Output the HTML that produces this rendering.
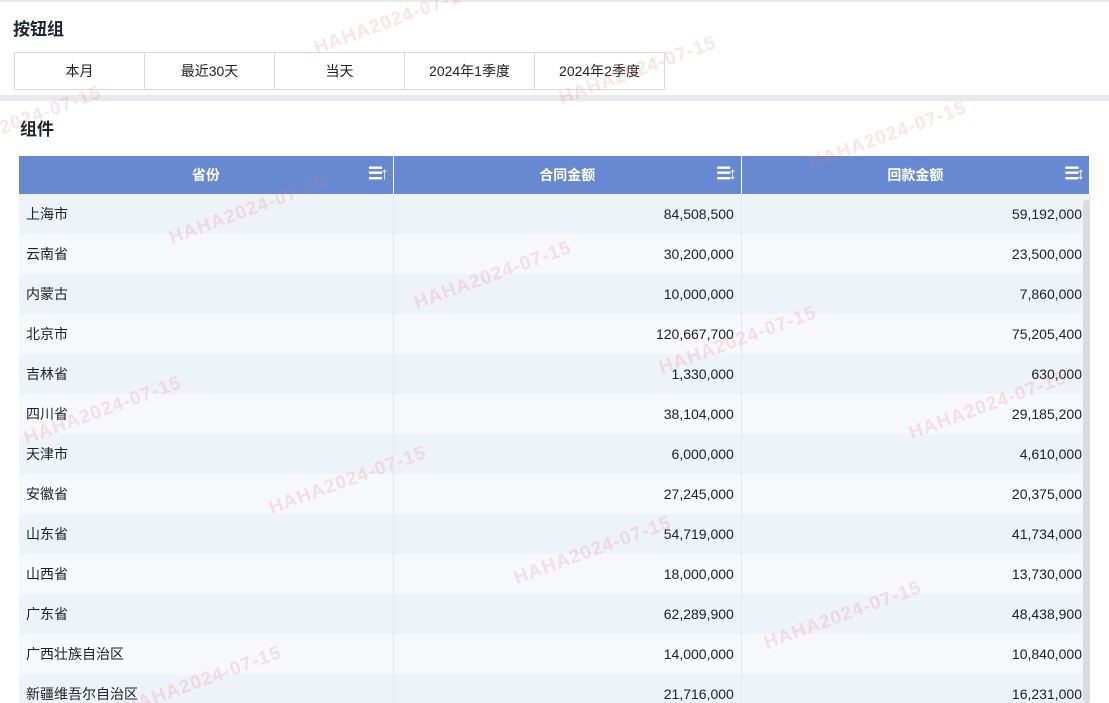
<!DOCTYPE html><html><head><meta charset="utf-8"><style>
html,body{margin:0;width:1109px;height:703px;overflow:hidden}
body{background:#e8e9ed;font-family:"Liberation Sans","Noto Sans CJK SC",sans-serif;position:relative}
.p1{position:absolute;left:0;top:2px;width:1109px;height:93px;background:#fff}
.p2{position:absolute;left:0;top:101px;width:1109px;height:602px;background:#fff;overflow:hidden}
h3{margin:0;position:absolute;font-size:17px;font-weight:bold;color:#1d2433}
.btns{position:absolute;left:14px;top:50px;display:flex}
.btns div{width:129px;height:36px;border:1px solid #d5d9e0;margin-right:-1px;text-align:center;line-height:36px;font-size:14px;color:#222;background:#fff}
table{position:absolute;left:19px;top:55px;border-collapse:collapse;font-size:14px;color:#222;table-layout:fixed;width:1071px}
th{background:#6689d1;color:#fff;height:38px;font-weight:bold;position:relative;border-right:1px solid #fff;font-size:14px;padding:0}
th span{position:absolute;right:7px;top:8px;font-weight:bold;font-size:17px;letter-spacing:-3px}
td{height:40px;padding:0 7px;border-right:1px solid #e6e9f0;box-sizing:border-box;white-space:nowrap}
tr:nth-child(even) td{background:#eef2f9}tr:nth-child(odd) td{background:#f6f8fc}
td.n{text-align:right}
.sb{position:absolute;left:1083px;top:200px;width:7px;height:503px;background:#d9dbe0;border-radius:4px}
.wm{position:absolute;color:rgba(235,120,120,.2);font-weight:bold;font-size:19px;transform:rotate(-20deg);white-space:nowrap;letter-spacing:1px}
</style></head><body>
<div class="p1"><h3 style="left:13px;top:13px">按钮组</h3>
<div class="btns"><div>本月</div><div>最近30天</div><div>当天</div><div>2024年1季度</div><div>2024年2季度</div></div></div>
<div class="p2"><h3 style="left:20px;top:14px">组件</h3>
<table><colgroup><col style="width:374px"><col style="width:348px"><col style="width:348px"></colgroup>
<tr><th>省份<span>☰↑</span></th><th>合同金额<span>☰↕</span></th><th>回款金额<span>☰↕</span></th></tr>
<tr><td>上海市</td><td class="n">84,508,500</td><td class="n">59,192,000</td></tr>
<tr><td>云南省</td><td class="n">30,200,000</td><td class="n">23,500,000</td></tr>
<tr><td>内蒙古</td><td class="n">10,000,000</td><td class="n">7,860,000</td></tr>
<tr><td>北京市</td><td class="n">120,667,700</td><td class="n">75,205,400</td></tr>
<tr><td>吉林省</td><td class="n">1,330,000</td><td class="n">630,000</td></tr>
<tr><td>四川省</td><td class="n">38,104,000</td><td class="n">29,185,200</td></tr>
<tr><td>天津市</td><td class="n">6,000,000</td><td class="n">4,610,000</td></tr>
<tr><td>安徽省</td><td class="n">27,245,000</td><td class="n">20,375,000</td></tr>
<tr><td>山东省</td><td class="n">54,719,000</td><td class="n">41,734,000</td></tr>
<tr><td>山西省</td><td class="n">18,000,000</td><td class="n">13,730,000</td></tr>
<tr><td>广东省</td><td class="n">62,289,900</td><td class="n">48,438,900</td></tr>
<tr><td>广西壮族自治区</td><td class="n">14,000,000</td><td class="n">10,840,000</td></tr>
<tr><td>新疆维吾尔自治区</td><td class="n">21,716,000</td><td class="n">16,231,000</td></tr>
</table></div>
<div class="sb"></div>
<div class="wm" style="left:310px;top:10px">HAHA2024-07-15</div>
<div class="wm" style="left:555px;top:60px">HAHA2024-07-15</div>
<div class="wm" style="left:805px;top:125px">HAHA2024-07-15</div>
<div class="wm" style="left:165px;top:200px">HAHA2024-07-15</div>
<div class="wm" style="left:410px;top:265px">HAHA2024-07-15</div>
<div class="wm" style="left:655px;top:330px">HAHA2024-07-15</div>
<div class="wm" style="left:905px;top:395px">HAHA2024-07-15</div>
<div class="wm" style="left:20px;top:400px">HAHA2024-07-15</div>
<div class="wm" style="left:265px;top:470px">HAHA2024-07-15</div>
<div class="wm" style="left:510px;top:540px">HAHA2024-07-15</div>
<div class="wm" style="left:760px;top:605px">HAHA2024-07-15</div>
<div class="wm" style="left:120px;top:670px">HAHA2024-07-15</div>
<div class="wm" style="left:-60px;top:110px">HAHA2024-07-15</div>
</body></html>
